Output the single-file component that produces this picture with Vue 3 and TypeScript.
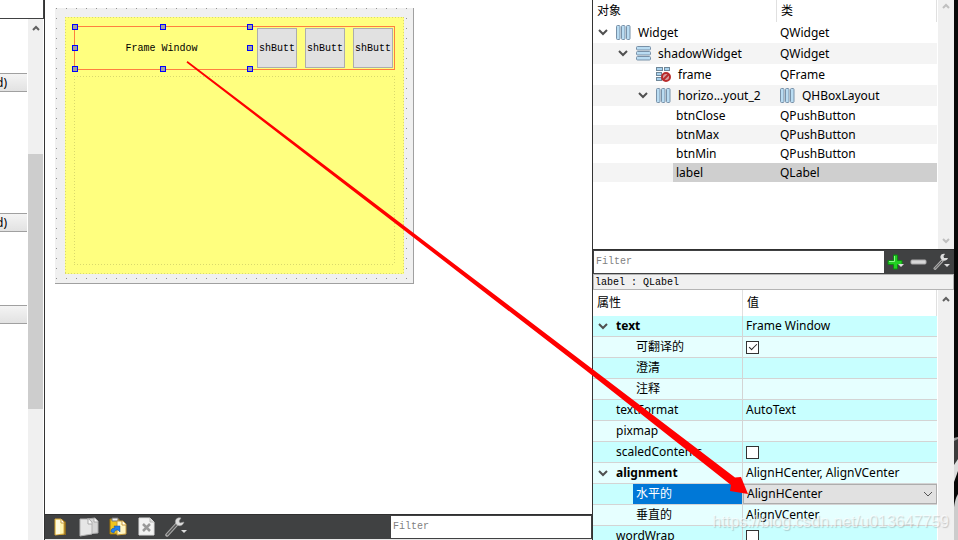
<script setup lang="ts">
import { ref } from 'vue'

type IconName = 'columns' | 'rows' | 'frame' | ''

interface TreeNode {
  name: string
  type: string
  depth: number
  icon: IconName
  open?: boolean
  typeIcon?: boolean
}

interface Property {
  name: string
  value?: string
  check?: boolean
  sub?: boolean
  group?: boolean
  combo?: boolean
}

const nodes: TreeNode[] = [
  { name: 'Widget', type: 'QWidget', depth: 0, icon: 'columns', open: true },
  { name: 'shadowWidget', type: 'QWidget', depth: 1, icon: 'rows', open: true },
  { name: 'frame', type: 'QFrame', depth: 2, icon: 'frame' },
  { name: 'horizo...yout_2', type: 'QHBoxLayout', depth: 2, icon: 'columns', open: true, typeIcon: true },
  { name: 'btnClose', type: 'QPushButton', depth: 3, icon: '' },
  { name: 'btnMax', type: 'QPushButton', depth: 3, icon: '' },
  { name: 'btnMin', type: 'QPushButton', depth: 3, icon: '' },
  { name: 'label', type: 'QLabel', depth: 3, icon: '' },
]

const properties: Property[] = [
  { name: 'text', value: 'Frame Window', group: true },
  { name: '可翻译的', check: true, sub: true },
  { name: '澄清', sub: true },
  { name: '注释', sub: true },
  { name: 'textFormat', value: 'AutoText' },
  { name: 'pixmap' },
  { name: 'scaledContents', check: false },
  { name: 'alignment', value: 'AlignHCenter, AlignVCenter', group: true },
  { name: '水平的', sub: true, combo: true },
  { name: '垂直的', value: 'AlignVCenter', sub: true },
  { name: 'wordWrap', check: false },
]

const selected = ref('label')
const align = ref('AlignHCenter')
</script>

<template>
  <div class="designer">
    <aside class="widget-box">
      <div class="widget-search"></div>
      <div class="widget-body">
        <div class="widget-list">
          <div class="category first">d)</div>
          <div class="category second">d)</div>
          <div class="category third"></div>
        </div>
        <div class="scrollbar left-scroll">
          <svg class="scroll-arrow" viewBox="0 0 8 6"><path d="M1 5 4 2 7 5" /></svg>
          <div class="thumb"></div>
        </div>
      </div>
    </aside>

    <main class="center">
      <div class="canvas">
        <div class="form">
          <div class="shadow-widget">
            <div class="title-row">
              <div class="title-label">
                Frame Window
                <div class="handles">
                  <i v-for="n in 9" :key="n" :class="{ none: n === 5 }"></i>
                </div>
              </div>
              <button v-for="n in 3" :key="n" class="form-button" type="button">shButt</button>
            </div>
            <div class="inner-frame"></div>
          </div>
        </div>
      </div>
      <div class="toolbar">
        <button type="button" class="tool" aria-label="New">
          <svg width="20" height="20" viewBox="0 0 20 20">
            <path d="M5 2h7l4 3v13H5z" fill="#8a6a20" />
            <path d="M5 2h6l3 3v12l-9 1z" fill="#fff6b4" stroke="#d6a536" />
            <path d="M6 3h4v14l-4 .500z" fill="#fffbe0" />
            <path d="M11 2v4h3" fill="#fff" stroke="#c9a14a" />
          </svg>
        </button>
        <button type="button" class="tool" aria-label="Copy">
          <svg width="20" height="20" viewBox="0 0 20 20">
            <path d="M8 2l8-1 3 3v12l-11 1z" fill="#d5d5d5" stroke="#aaa" />
            <path d="M1 2h9l3 3v12L1 19z" fill="#e6e6e6" stroke="#b2b2b2" />
            <path d="M9 2v5h4M15 1v4h4" fill="#fafafa" stroke="#aaa" />
          </svg>
        </button>
        <button type="button" class="tool" aria-label="Paste">
          <svg width="20" height="20" viewBox="0 0 20 20">
            <path d="M2 2h9v15H2z" fill="#f0c41c" stroke="#9c7208" />
            <path d="M4 1h6v3H4z" fill="#eee" stroke="#777" />
            <path d="M9 4h6l3 3v10l-9 1z" fill="#fff4c0" stroke="#c69a3a" />
            <path d="M14 4v4h4" fill="#fff" stroke="#c69a3a" />
            <path d="M3 15c0-3 1-4 4-4l-1-2h6v6l-2-2c-3 0-3 1-4 3z" fill="#2080ee" stroke="#164b9c" stroke-width=".500" />
          </svg>
        </button>
        <button type="button" class="tool" aria-label="Delete">
          <svg width="20" height="20" viewBox="0 0 20 20">
            <path d="M2 1h11l4 4v13H2z" fill="#f2f2f2" stroke="#ddd" />
            <path d="M13 1v4h4" fill="#ddd" stroke="#bbb" />
            <path d="M6 7l7 7M13 7l-7 7" stroke="#999" stroke-width="2.500" />
          </svg>
        </button>
        <button type="button" class="tool" aria-label="Configure">
          <svg width="24" height="20" viewBox="0 0 24 20">
            <path d="M3 18 13 7" stroke="#aaa" stroke-width="3.500" stroke-linecap="round" />
            <path d="M3 18 13 7" stroke="#555" stroke-width="1.500" />
            <path d="M17 1c-4-1-7 2-5 6 3 3 7 2 8-2l-4 1-1-2z" fill="#ddd" stroke="#999" stroke-width=".500" />
            <path d="M17 13h6l-3 3z" fill="#ddd" />
          </svg>
        </button>
        <input class="filter center-filter" type="text" placeholder="Filter" aria-label="Filter actions" />
      </div>
      <div class="bottom-edge"></div>
    </main>

    <aside class="inspector">
      <section class="object-panel">
        <table class="tree">
          <colgroup><col class="name-col" /><col /></colgroup>
          <thead>
            <tr><th>对象</th><th>类</th></tr>
          </thead>
          <tbody>
            <tr
              v-for="node in nodes"
              :key="node.name"
              :class="{ small: !node.icon, selected: selected === node.name }"
              @click="selected = node.name"
            >
              <td>
                <div class="node">
                  <span class="branch" :class="'depth-' + node.depth">
                    <svg v-if="node.open" class="chevron" viewBox="0 0 10 7"><path d="M1 1 5 5 9 1" /></svg>
                  </span>
                  <span class="node-name">
                    <svg v-if="node.icon === 'columns'" class="node-icon" viewBox="0 0 15 15">
                      <g fill="#b9dcf2" stroke="#7891a8">
                        <rect x=".500" y=".500" width="3.500" height="14" rx="1" />
                        <rect x="5.500" y=".500" width="3.500" height="14" rx="1" />
                        <rect x="10.500" y=".500" width="3.500" height="14" rx="1" />
                      </g>
                    </svg>
                    <svg v-else-if="node.icon === 'rows'" class="node-icon" viewBox="0 0 15 15">
                      <g fill="#b9dcf2" stroke="#7891a8">
                        <rect x=".500" y=".500" width="14" height="3.500" rx="1" />
                        <rect x=".500" y="5.500" width="14" height="3.500" rx="1" />
                        <rect x=".500" y="10.500" width="14" height="3.500" rx="1" />
                      </g>
                    </svg>
                    <svg v-else-if="node.icon === 'frame'" class="node-icon" viewBox="0 0 15 15">
                      <g fill="#a9d2ee" stroke="#6f8798">
                        <rect x=".500" y=".500" width="6" height="3" />
                        <rect x="8.500" y=".500" width="5" height="3" />
                        <rect x=".500" y="5.500" width="5" height="3" />
                        <rect x=".500" y="10.500" width="5" height="3" />
                      </g>
                      <circle cx="10" cy="10" r="4" fill="#d8a0a0" stroke="#b92c2c" stroke-width="2" />
                      <path d="M7 13l6-6" stroke="#b92c2c" stroke-width="2" />
                    </svg>
                    {{ node.name }}
                  </span>
                </div>
              </td>
              <td>
                <div class="node-type">
                  <svg v-if="node.typeIcon" class="node-icon" viewBox="0 0 15 15">
                    <g fill="#b9dcf2" stroke="#7891a8">
                      <rect x=".500" y=".500" width="3.500" height="14" rx="1" />
                      <rect x="5.500" y=".500" width="3.500" height="14" rx="1" />
                      <rect x="10.500" y=".500" width="3.500" height="14" rx="1" />
                    </g>
                  </svg>
                  {{ node.type }}
                </div>
              </td>
            </tr>
          </tbody>
        </table>
        <div class="scrollbar faded">
          <svg class="scroll-arrow" viewBox="0 0 8 6"><path d="M1 5 4 2 7 5" /></svg>
          <svg class="scroll-arrow" viewBox="0 0 8 6"><path d="M1 1 4 4 7 1" /></svg>
        </div>
      </section>

      <div class="property-tools">
        <input class="filter" type="text" placeholder="Filter" aria-label="Filter properties" />
        <button type="button" class="mini" aria-label="Add property">
          <svg width="18" height="18" viewBox="0 0 18 18">
            <path d="M6.500 2h4v5.500H15v4h-4.500V16h-4v-4.500H1v-4h5.500z" fill="#22cf22" stroke="#0c8a10" />
            <path d="M7.500 3v5.500H2" fill="none" stroke="#8cf58c" />
            <path d="M11 11h6l-3 3z" fill="#ddd" />
          </svg>
        </button>
        <button type="button" class="mini" aria-label="Remove property">
          <svg width="18" height="18" viewBox="0 0 18 18">
            <rect x="1" y="7" width="15" height="4" rx="1" fill="#d8d8d8" stroke="#aaa" />
          </svg>
        </button>
        <button type="button" class="mini" aria-label="Configure properties">
          <svg width="18" height="18" viewBox="0 0 18 18">
            <path d="M2 15.500 9 8" stroke="#aaa" stroke-width="3" stroke-linecap="round" />
            <path d="M2 15.500 9 8" stroke="#555" />
            <path d="M12 1c-3-1-6 2-4 5 2 3 6 2 7-1l-4 0-.500-2z" fill="#ddd" />
            <path d="M11 11h6l-3 3z" fill="#ddd" />
          </svg>
        </button>
      </div>

      <div class="object-title">label : QLabel</div>

      <section class="property-panel">
        <table class="props">
          <colgroup><col class="prop-col" /><col /></colgroup>
          <thead>
            <tr><th>属性</th><th>值</th></tr>
          </thead>
          <tbody>
            <tr v-for="p in properties" :key="p.name" :class="{ group: p.group, sub: p.sub, current: p.combo }">
              <td>
                <div class="prop-name">
                  <span class="prop-branch">
                    <svg v-if="p.group" class="chevron" viewBox="0 0 10 7"><path d="M1 1 5 5 9 1" /></svg>
                  </span>
                  <span class="prop-text">{{ p.name }}</span>
                </div>
              </td>
              <td>
                <div class="prop-value">
                  <input v-if="p.check !== undefined" type="checkbox" class="check" :checked="p.check" :aria-label="p.name" />
                  <div v-else-if="p.combo" class="combo">
                    <select v-model="align" :aria-label="p.name">
                      <option>AlignHCenter</option>
                    </select>
                    <svg class="combo-arrow" viewBox="0 0 10 6"><path d="M1 1 5 5 9 1" /></svg>
                  </div>
                  <template v-else>{{ p.value }}</template>
                </div>
              </td>
            </tr>
          </tbody>
        </table>
        <div class="scrollbar">
          <svg class="scroll-arrow" viewBox="0 0 8 6"><path d="M1 5 4 2 7 5" /></svg>
        </div>
      </section>
    </aside>

    <div class="desktop-edge">
      <svg width="4" height="103" viewBox="0 0 4 103">
        <path d="M0 1 4 0V22L0 30z" fill="#3c3c3c" />
        <path d="M0 1 4 0v2L0 4z" fill="#999" />
        <path d="M0 28 4 22V34L0 45z" fill="#ddd" />
        <path d="M0 70Q1 62 4 57V103H0z" fill="#ccc" />
      </svg>
    </div>

    <svg class="pointer" viewBox="0 0 958 540" preserveAspectRatio="xMinYMin meet">
      <path d="M187.500 61 735 477.500 741 477 748 494 730 491 731 485 586 370.500 186.500 62.500z" fill="#f00" />
    </svg>
    <div class="watermark">https://blog.csdn.net/u013647759</div>
  </div>
</template>

<style>
body {
  margin: 0;
  overflow: hidden;
}
</style>

<style scoped>
.designer {
  position: relative;
  display: grid;
  grid-template-columns: 44px minmax(0, 1fr) 362px 4px;
  height: 100vh;
  overflow: hidden;
  background: #fff;
  color: #000;
  font: 12px/20px "Noto Sans", "Noto Sans CJK SC", sans-serif;
}

button,
input,
select {
  box-sizing: border-box;
  margin: 0;
  padding: 0;
  border: 0;
  border-radius: 0;
  font: inherit;
  color: inherit;
}

/* widget box */
.widget-box {
  display: flex;
  flex-direction: column;
  min-height: 0;
}

.widget-search {
  box-sizing: border-box;
  height: 19px;
  border-right: 1px solid #404142;
  border-bottom: 1px solid #404142;
}

.widget-body {
  display: flex;
  flex: 1;
  justify-content: space-between;
  min-height: 0;
  padding-right: 1px;
}

.widget-list {
  width: 27px;
  padding-top: 54px;
}

.category {
  box-sizing: border-box;
  display: flex;
  justify-content: flex-end;
  height: 19px;
  padding-right: 20px;
  overflow: hidden;
  border-top: 1px solid #a0a0a0;
  border-bottom: 1px solid #a0a0a0;
  background: linear-gradient(#f4f4f4, #e2e2e2);
  line-height: 17px;
}

.category.first {
  margin-bottom: 121px;
}

.category.second {
  margin-bottom: 73px;
}

.scrollbar {
  box-sizing: border-box;
  display: flex;
  flex-direction: column;
  align-items: center;
  justify-content: space-between;
  width: 16px;
  padding: 6px 0 5px;
  background: #f0f0f0;
}

.left-scroll {
  justify-content: flex-start;
  width: 15px;
}

.scroll-arrow {
  flex: none;
  width: 8px;
  height: 6px;
}

.scroll-arrow path {
  fill: none;
  stroke: #606060;
  stroke-width: 2;
}

.faded {
  padding: 3px 0 5px;
}

.faded path {
  stroke: #bfbfbf;
}

.thumb {
  width: 100%;
  height: 50%;
  max-height: 255px;
  margin-top: 123px;
  background: #cdcdcd;
}

/* form canvas */
.center {
  display: flex;
  flex-direction: column;
  min-width: 0;
  border-left: 1px solid #333;
}

.canvas {
  flex: 1;
  min-height: 0;
  padding: 8px 10px;
  overflow: hidden;
}

.form {
  box-sizing: border-box;
  width: 359px;
  height: 276px;
  padding: 9px;
  padding-left: 10px;
  border-right: 1px solid #a0a0a0;
  border-bottom: 1px solid #a0a0a0;
  background:
    conic-gradient(from 0deg at 1px 1px, transparent 270deg, #909090 0) 1px 0 / 10px 10px,
    #f0f0f0;
}

.shadow-widget {
  box-sizing: border-box;
  display: flex;
  flex-direction: column;
  gap: 6px;
  height: 257px;
  padding: 9px;
  background:
    repeating-linear-gradient(90deg, #d9d96c 0 1px, transparent 1px 3px) 0 0 / 100% 1px no-repeat,
    repeating-linear-gradient(90deg, #d9d96c 0 1px, transparent 1px 3px) 0 100% / 100% 1px no-repeat,
    repeating-linear-gradient(#d9d96c 0 1px, transparent 1px 3px) 0 0 / 1px 100% no-repeat,
    repeating-linear-gradient(#d9d96c 0 1px, transparent 1px 3px) 100% 0 / 1px 100% no-repeat,
    #ffff7f;
}

.title-row {
  box-sizing: border-box;
  display: flex;
  gap: 8px;
  height: 44px;
  padding: 1px;
  border: 1px solid #ff7f3f;
  font: 10px/42px "Liberation Mono", monospace;
}

.title-label {
  position: relative;
  flex: 1;
  height: 40px;
  padding-right: 2px;
  text-align: center;
}

.handles {
  position: absolute;
  inset: -4px;
  display: grid;
  grid-template-columns: repeat(3, 6px);
  grid-template-rows: repeat(3, 6px);
  align-content: space-between;
  justify-content: space-between;
}

.handles i {
  box-sizing: border-box;
  border: 1px solid #00f;
  background: #a0a0a0;
}

.handles .none {
  visibility: hidden;
}

.form-button {
  width: 40px;
  height: 40px;
  border: 1px solid #adadad;
  background: #e1e1e1;
  line-height: 40px;
  text-align: center;
}

.inner-frame {
  flex: 1;
  background:
    repeating-linear-gradient(90deg, #d9d96c 0 1px, transparent 1px 3px) 0 0 / 100% 1px no-repeat,
    repeating-linear-gradient(90deg, #d9d96c 0 1px, transparent 1px 3px) 0 100% / 100% 1px no-repeat,
    repeating-linear-gradient(#d9d96c 0 1px, transparent 1px 3px) 0 0 / 1px 100% no-repeat,
    repeating-linear-gradient(#d9d96c 0 1px, transparent 1px 3px) 100% 0 / 1px 100% no-repeat;
}

/* toolbars */
.toolbar {
  box-sizing: border-box;
  display: flex;
  align-items: flex-start;
  height: 25px;
  padding: 1px 1px 0 0;
  border-top: 1px solid #303030;
  background: #404142;
}

.bottom-edge {
  height: 1px;
  background: #e8e8e8;
}

.tool,
.mini {
  display: flex;
  flex: none;
  align-items: center;
  justify-content: center;
  width: 29px;
  height: 22px;
  background: none;
}

.mini {
  width: 23px;
}

.tool svg,
.mini svg {
  flex: none;
}

.filter {
  flex: 1;
  min-width: 0;
  height: 22px;
  padding: 0 2px;
  outline: none;
  background: #fff;
  font: 10px/22px "Liberation Mono", monospace;
}

.filter::placeholder {
  color: #7f7f7f;
  opacity: 1;
}

.center-filter {
  flex: 0 1 200px;
  margin-left: auto;
}

/* inspector */
.inspector {
  display: flex;
  flex-direction: column;
  min-width: 0;
  min-height: 0;
  border-left: 1px solid #333;
}

.object-panel {
  display: flex;
  align-items: stretch;
  height: 249px;
}

table {
  flex: 1;
  align-self: flex-start;
  min-width: 0;
  margin-right: 1px;
  border-spacing: 0;
  table-layout: fixed;
}

td,
th {
  padding: 0;
  overflow: hidden;
  white-space: nowrap;
}

th {
  box-sizing: border-box;
  padding-left: 4px;
  border-right: 1px solid #e0e0e0;
  font-weight: 400;
  text-align: left;
}

.name-col {
  width: 184px;
}

.tree th {
  height: 22px;
}

.tree tbody tr {
  height: 21px;
}

.tree tbody tr.small {
  height: 19px;
}

.tree tbody tr:nth-child(even) {
  background: #f4f4f4;
}

.tree .selected .node-name,
.tree .selected td:last-child {
  background: #cfcfcf;
}

.node,
.node-type,
.prop-name,
.prop-value {
  display: flex;
  align-items: center;
  height: 21px;
}

.small .node,
.small .node-type {
  height: 19px;
}

.branch {
  box-sizing: border-box;
  display: flex;
  flex: none;
  justify-content: flex-end;
  padding-right: 5px;
}

.depth-0 {
  width: 20px;
}

.depth-1 {
  width: 40px;
}

.depth-2 {
  width: 60px;
}

.depth-3 {
  width: 80px;
}

.chevron {
  width: 10px;
  height: 7px;
}

.chevron path {
  fill: none;
  stroke: #505050;
  stroke-width: 2;
}

.node-name {
  display: flex;
  flex: 1;
  align-items: center;
  gap: 7px;
  height: 100%;
  padding-left: 3px;
}

.node-icon {
  flex: none;
  width: 15px;
  height: 15px;
}

.node-type {
  gap: 7px;
  padding-left: 3px;
}

.property-tools {
  display: flex;
  padding: 1px 1px 1px 0;
  border-top: 1px solid #303030;
  background: #404142;
}

.property-tools .filter {
  margin-left: 1px;
}

.object-title {
  box-sizing: border-box;
  height: 16px;
  padding-left: 1px;
  border: 1px solid #b4b4b4;
  background: #f0f0f0;
  font: 10px/16px "Liberation Mono", monospace;
}

.property-panel {
  display: flex;
  flex: 1;
  align-items: stretch;
  min-height: 0;
  overflow: hidden;
}

.prop-col {
  width: 150px;
}

.props th {
  height: 26px;
}

.props tbody tr {
  height: 21px;
  background: #e6ffff;
}

.props tbody tr:nth-child(odd) {
  background: #c8ffff;
}

.props td {
  box-sizing: border-box;
  height: 21px;
  border-bottom: 1px solid #d4d4d4;
}

.props td:first-child {
  border-right: 1px solid #d4d4d4;
}

.prop-name,
.prop-value {
  height: 20px;
}

.prop-branch {
  box-sizing: border-box;
  display: flex;
  flex: none;
  justify-content: flex-end;
  width: 20px;
  padding-right: 5px;
}

.sub .prop-branch {
  width: 40px;
}

.prop-text {
  flex: 1;
  padding-left: 3px;
}

.group .prop-text {
  font-weight: 700;
}

.current .prop-text {
  background: #0078d7;
  color: #fff;
}

.prop-value {
  padding-left: 3px;
}

.current .prop-value {
  padding: 0;
}

.check {
  appearance: none;
  display: grid;
  place-items: center;
  width: 13px;
  height: 13px;
  border: 1px solid #333;
  background: #fff;
}

.check:checked::after {
  content: "";
  width: 7px;
  height: 3px;
  margin-top: -3px;
  border-left: 1px solid #222;
  border-bottom: 1px solid #222;
  transform: rotate(-45deg);
}

.combo {
  position: relative;
  flex: 1;
  height: 20px;
}

.combo select {
  appearance: none;
  width: 100%;
  height: 20px;
  padding-left: 3px;
  border: 1px solid #adadad;
  background: #e1e1e1;
  line-height: 18px;
}

.combo-arrow {
  position: absolute;
  top: 7px;
  right: 4px;
  width: 10px;
  height: 6px;
  pointer-events: none;
}

.combo-arrow path {
  fill: none;
  stroke: #555;
}

.desktop-edge {
  display: flex;
  align-items: flex-end;
  background: #080808;
}

/* annotation layer */
.pointer {
  position: absolute;
  inset: 0;
  width: 958px;
  height: 540px;
  pointer-events: none;
}

.watermark {
  position: absolute;
  right: 9px;
  bottom: 8px;
  color: rgba(255, 255, 255, 0.65);
  font: 16px/20px "Liberation Sans", sans-serif;
  text-shadow: 1px 1px 1px rgba(120, 120, 120, 0.35);
  pointer-events: none;
}
</style>
